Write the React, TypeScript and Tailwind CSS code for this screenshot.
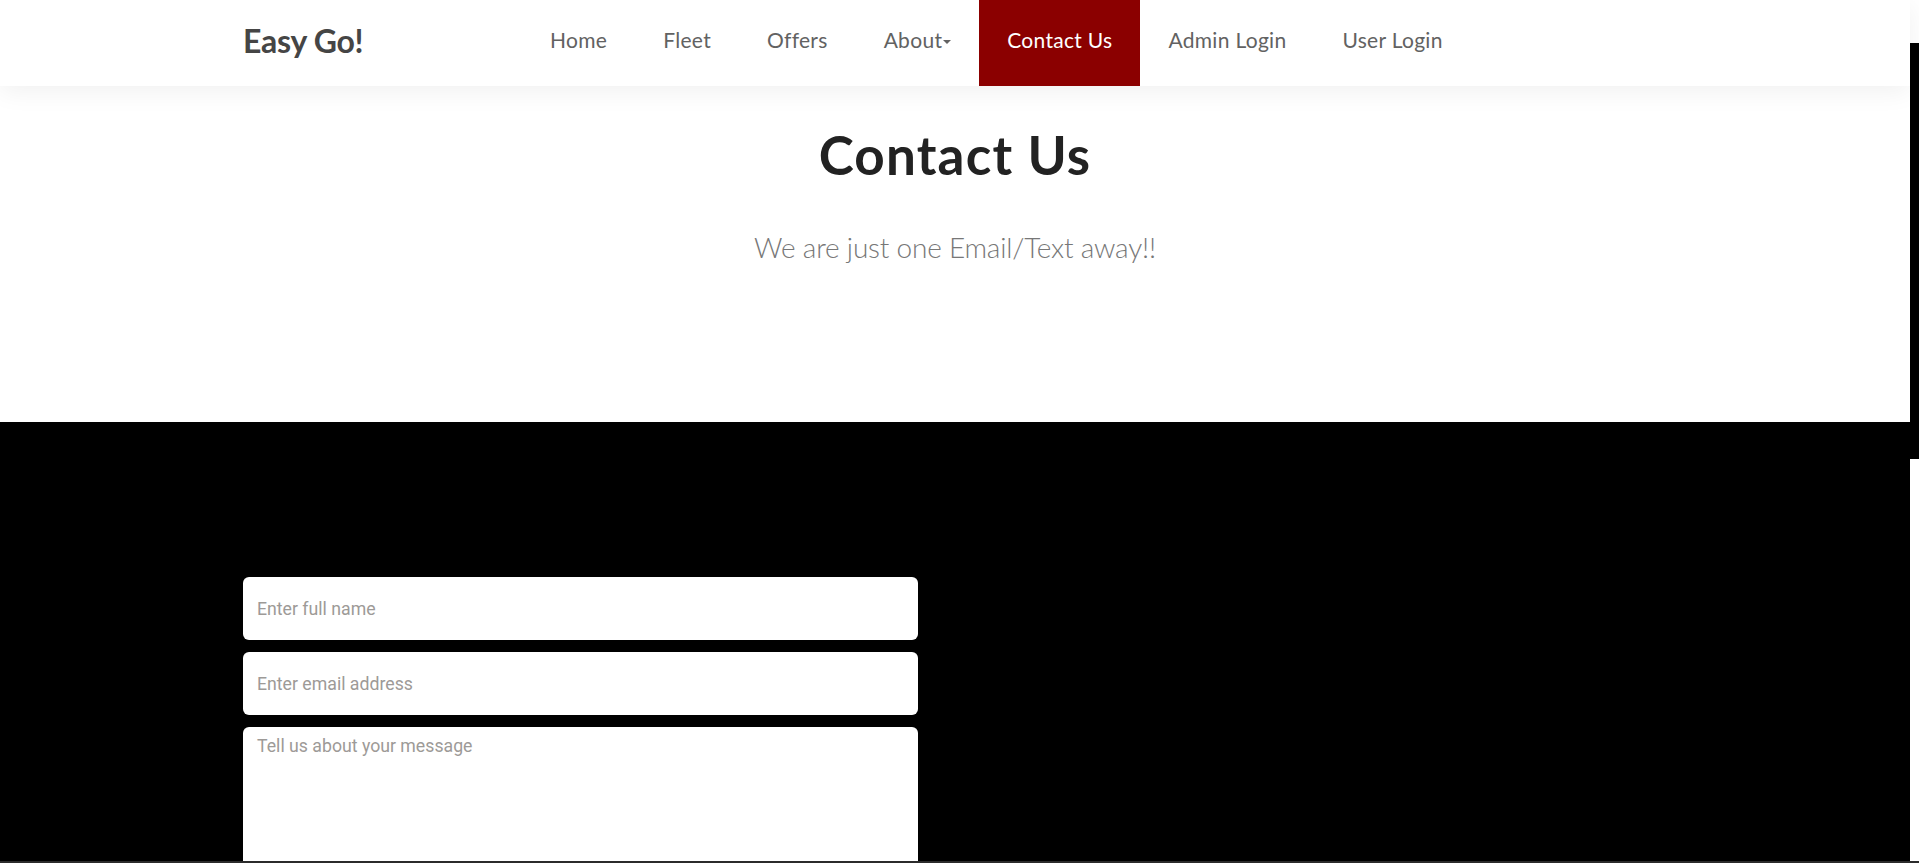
import React from "react";

const navItems = ["Home", "Fleet", "Offers", "About", "Contact Us", "Admin Login", "User Login"];

const App = () => {
  return (
    <div className="flex flex-col h-[863px] overflow-hidden bg-white font-['Lato','Noto_Sans',sans-serif]">
      <div className="flex flex-1 min-h-0">
        {/* Main page */}
        <div className="flex flex-col flex-1 min-w-0">
          {/* Navbar */}
          <header className="relative z-10 h-[86px] shrink-0 bg-white shadow-[0_6px_24px_rgba(0,0,0,0.06)]">
            <div className="flex h-full pl-[243px]">
              <div className="flex items-center w-[279px] pb-[5px]">
                <span className="text-[32px] font-bold text-[#454545] tracking-[-0.3px]">Easy Go!</span>
              </div>
              <nav className="flex h-full">
                {navItems.map((item) => {
                  const active = item === "Contact Us";
                  return (
                    <a
                      key={item}
                      className={
                        active
                          ? "flex items-center h-full px-[28px] pb-[6px] text-[21px] tracking-[0.3px] text-white bg-[#8b0000] cursor-pointer"
                          : "flex items-center h-full px-[28px] pb-[6px] text-[21px] tracking-[0.3px] text-[#626262] cursor-pointer"
                      }
                    >
                      {item}
                      {item === "About" && (
                        <span className="inline-block ml-[1px] mt-[3px] w-0 h-0 border-x-[4px] border-t-[4px] border-x-transparent border-t-[#626262]" />
                      )}
                    </a>
                  );
                })}
              </nav>
            </div>
          </header>

          {/* Hero */}
          <section className="h-[336px] shrink-0 bg-white flex flex-col items-center pt-[37px]">
            <h1 className="text-[53px] leading-[1.2] font-bold tracking-[1.2px] text-[#222]">Contact Us</h1>
            <p className="mt-[44px] text-[28px] leading-[1.2] font-light tracking-[-0.2px] text-[#777]">
              We are just one Email/Text away!!
            </p>
          </section>

          {/* Form section */}
          <section className="flex-1 bg-black pt-[155px] pl-[243px]">
            <form className="flex flex-col gap-[12px] w-[675px] font-['Roboto','Liberation_Sans',sans-serif]">
              <input
                type="text"
                placeholder="Enter full name"
                className="h-[63px] rounded-md bg-white px-[14px] text-[17.7px] placeholder:text-[#9d9a97] outline-none"
              />
              <input
                type="email"
                placeholder="Enter email address"
                className="h-[63px] rounded-md bg-white px-[14px] text-[17.7px] placeholder:text-[#9d9a97] outline-none"
              />
              <textarea
                placeholder="Tell us about your message"
                className="h-[220px] rounded-md bg-white px-[14px] pt-[6px] text-[17.7px] leading-[1.5] resize-none placeholder:text-[#9d9a97] outline-none"
              />
            </form>
          </section>
        </div>

        {/* Scrollbar */}
        <div className="flex flex-col w-[9px] shrink-0">
          <div className="h-[43px] bg-white" />
          <div className="h-[416px] bg-black" />
          <div className="flex-1 bg-white" />
        </div>
      </div>
      <div className="h-[2px] shrink-0 bg-[#2b2b2b]" />
    </div>
  );
};

export default App;
